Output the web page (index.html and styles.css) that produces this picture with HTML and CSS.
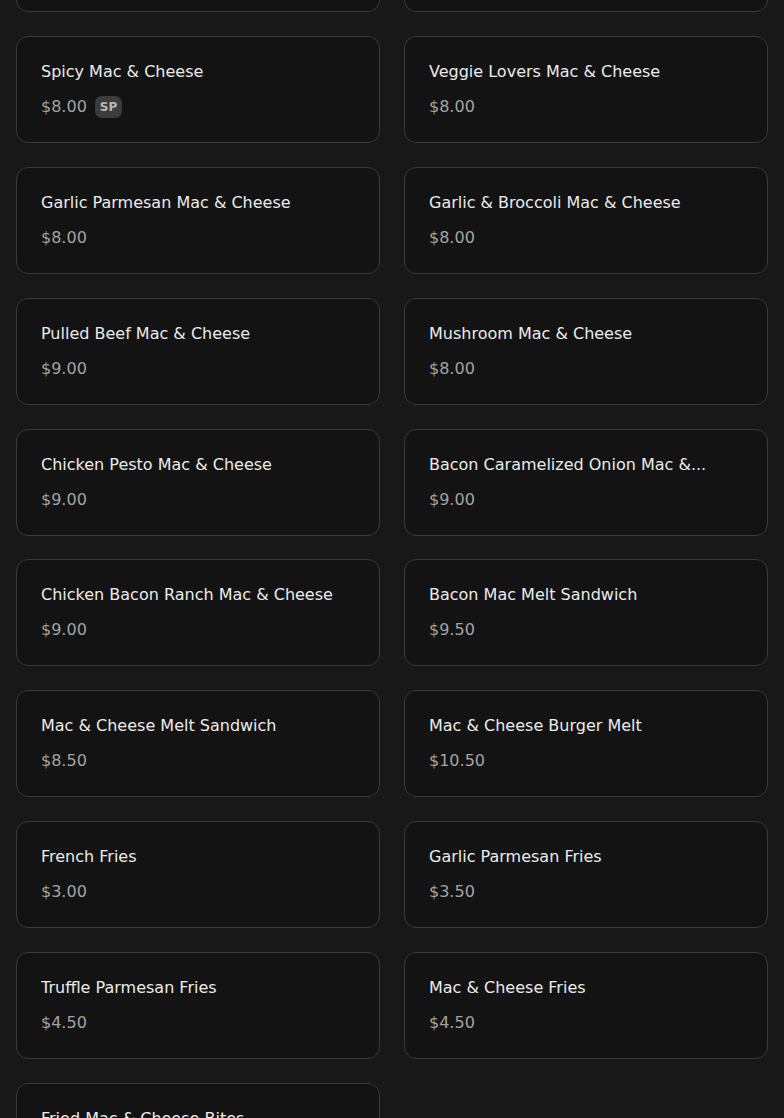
FILE: index.html
```html
<!DOCTYPE html>
<html lang="en">
<head>
<meta charset="UTF-8">
<meta name="viewport" content="width=device-width, initial-scale=1.0">
<title>Menu</title>
<link rel="stylesheet" href="styles.css">
</head>
<body>
<div class="menu">
    <div class="item">
        <p class="item-name">Classic Mac &amp; Cheese</p>
        <p class="item-price">$7.00</p>
    </div>
    <div class="item">
        <p class="item-name">Three Cheese Mac &amp; Cheese</p>
        <p class="item-price">$8.00</p>
    </div>

    <div class="item">
        <p class="item-name">Spicy Mac &amp; Cheese</p>
        <p class="item-price">$8.00 <span class="tag">SP</span></p>
    </div>
    <div class="item">
        <p class="item-name">Veggie Lovers Mac &amp; Cheese</p>
        <p class="item-price">$8.00</p>
    </div>

    <div class="item">
        <p class="item-name">Garlic Parmesan Mac &amp; Cheese</p>
        <p class="item-price">$8.00</p>
    </div>
    <div class="item">
        <p class="item-name">Garlic &amp; Broccoli Mac &amp; Cheese</p>
        <p class="item-price">$8.00</p>
    </div>

    <div class="item">
        <p class="item-name">Pulled Beef Mac &amp; Cheese</p>
        <p class="item-price">$9.00</p>
    </div>
    <div class="item">
        <p class="item-name">Mushroom Mac &amp; Cheese</p>
        <p class="item-price">$8.00</p>
    </div>

    <div class="item">
        <p class="item-name">Chicken Pesto Mac &amp; Cheese</p>
        <p class="item-price">$9.00</p>
    </div>
    <div class="item">
        <p class="item-name">Bacon Caramelized Onion Mac &amp;...</p>
        <p class="item-price">$9.00</p>
    </div>

    <div class="item">
        <p class="item-name">Chicken Bacon Ranch Mac &amp; Cheese</p>
        <p class="item-price">$9.00</p>
    </div>
    <div class="item">
        <p class="item-name">Bacon Mac Melt Sandwich</p>
        <p class="item-price">$9.50</p>
    </div>

    <div class="item">
        <p class="item-name">Mac &amp; Cheese Melt Sandwich</p>
        <p class="item-price">$8.50</p>
    </div>
    <div class="item">
        <p class="item-name">Mac &amp; Cheese Burger Melt</p>
        <p class="item-price">$10.50</p>
    </div>

    <div class="item">
        <p class="item-name">French Fries</p>
        <p class="item-price">$3.00</p>
    </div>
    <div class="item">
        <p class="item-name">Garlic Parmesan Fries</p>
        <p class="item-price">$3.50</p>
    </div>

    <div class="item">
        <p class="item-name">Truffle Parmesan Fries</p>
        <p class="item-price">$4.50</p>
    </div>
    <div class="item">
        <p class="item-name">Mac &amp; Cheese Fries</p>
        <p class="item-price">$4.50</p>
    </div>

    <div class="item">
        <p class="item-name">Fried Mac &amp; Cheese Bites</p>
        <p class="item-price">$6.00</p>
    </div>
</div>
</body>
</html>
```

FILE: styles.css
```css
:root {
    /* colors */
    --page: #181818;
    --card: #131313;
    --line: #3a3a3a;
    --text: #ebebeb;
    --muted: #a3a3a3;
    --tag: #3c3c3c;
    /* fonts */
    --Sans: "DejaVu Sans", "Liberation Sans", sans-serif;
    /* sizes */
    --radius: 12px;
}

body {
    font-family: var(--Sans);
    background-color: var(--page);
    margin: 0;
    overflow: hidden;
}

.menu {
    display: grid;
    grid-template-columns: 1fr 1fr;
    gap: 23.875px 24px;
    padding: 0 16px;
    margin-top: -95px;
}

.item {
    background-color: var(--card);
    border: 1px solid var(--line);
    border-radius: var(--radius);
    padding: 24px 24px 23px;
}

.item-name {
    margin: 0;
    font-size: 16px;
    line-height: 22px;
    color: var(--text);
    white-space: nowrap;
    overflow: hidden;
}

.item-price {
    margin: 12px 0 0;
    font-size: 16px;
    line-height: 24px;
    height: 24px;
    color: var(--muted);
    display: flex;
    align-items: center;
    gap: 8px;
}

.tag {
    background-color: var(--tag);
    color: #b9b9b9;
    font-size: 12px;
    font-weight: bold;
    line-height: 16px;
    padding: 3px 5px;
    border-radius: 7px;
}
```
